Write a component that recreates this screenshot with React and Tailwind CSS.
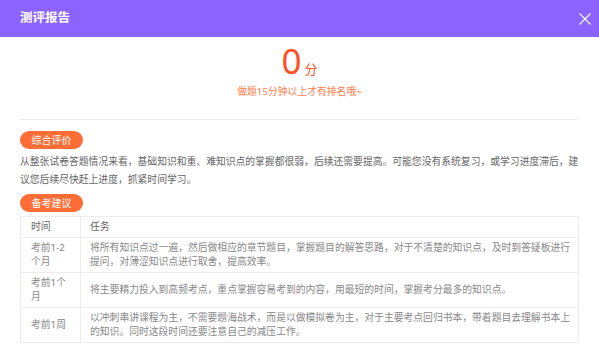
const FONT = { fontFamily: '"Noto Sans", "Noto Sans CJK SC", sans-serif' };

const PLAN = [
  { when: "考前1-2个月", task: "将所有知识点过一遍，然后做相应的章节题目，掌握题目的解答思路，对于不清楚的知识点，及时到答疑板进行提问，对薄涩知识点进行取舍，提高效率。" },
  { when: "考前1个月", task: "将主要精力投入到高频考点，重点掌握容易考到的内容，用最短的时间，掌握考分最多的知识点。" },
  { when: "考前1周", task: "以冲刺串讲课程为主，不需要题海战术，而是以做模拟卷为主，对于主要考点回归书本，带着题目去理解书本上的知识。同时这段时间还要注意自己的减压工作。" },
];

const Tag = ({ children, className }) => (
  <div className={"flex h-[18px] w-[63px] items-center justify-center rounded-full bg-[#ff6d36] text-[10px] leading-none text-white " + className}>
    {children}
  </div>
);

export default function App() {
  return (
    <div className="h-[345px] w-[599px] overflow-hidden bg-white" style={FONT}>
      <div className="flex h-[37px] items-center justify-between bg-[#8c63fe] pl-5 pr-[4px]">
        <h1 className="text-[12.5px] font-bold text-white">测评报告</h1>
        <button className="flex h-[20px] w-[20px] items-center justify-center text-white" aria-label="关闭">
          <svg width="12" height="12" viewBox="0 0 12 12" fill="none" stroke="currentColor" strokeWidth="1.1">
            <path d="M0.5 0.5 L11.5 11.5 M11.5 0.5 L0.5 11.5" />
          </svg>
        </button>
      </div>

      <div className="px-5">
        <div className="flex flex-col items-center border-b border-[#eeeeee] pb-[20px]">
          <div className="flex items-baseline text-[#ff5124]">
            <span className="text-[35px] leading-[47px]">0</span>
            <span className="ml-[3px] text-[13px]">分</span>
          </div>
          <p className="mt-[1px] text-[9.8px] leading-[14px] text-[#ff7d4d]">做题15分钟以上才有排名哦~</p>
        </div>

        <Tag className="mt-[11px]">综合评价</Tag>
        <p className="mt-[4px] text-[9.8px] leading-[18px] text-[#666666]">
          从整张试卷答题情况来看，基础知识和重、难知识点的掌握都很弱，后续还需要提高。可能您没有系统复习，或学习进度滞后，建议您后续尽快赶上进度，抓紧时间学习。
        </p>

        <Tag className="mt-[5px]">备考建议</Tag>

        <table className="mt-[4px] w-full border-collapse text-[9.8px] leading-[14px] text-[#888888]">
          <thead>
            <tr>
              <th className="w-[60px] border border-[#ececec] px-[10px] py-[3px] text-left font-normal text-[#666666]">时间</th>
              <th className="border border-[#ececec] px-[9px] py-[3px] text-left font-normal text-[#666666]">任务</th>
            </tr>
          </thead>
          <tbody>
            {PLAN.map((r) => (
              <tr key={r.when}>
                <td className="border border-[#ececec] px-[10px] py-[3px] align-middle">{r.when}</td>
                <td className="border border-[#ececec] py-[3px] pl-[9px] pr-[2px] align-middle">{r.task}</td>
              </tr>
            ))}
          </tbody>
        </table>
      </div>
    </div>
  );
}
